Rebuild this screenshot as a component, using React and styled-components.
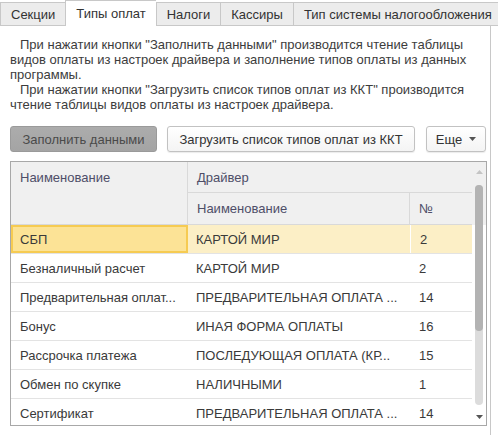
import React from "react";
import styled, { createGlobalStyle } from "styled-components";

const Global = createGlobalStyle`
  html, body { margin: 0; padding: 0; background: #fff; }
  body { font-family: "Liberation Sans", Arial, sans-serif; }
`;

const Root = styled.div`
  width: 498px;
  height: 435px;
  overflow: hidden;
  background: #fff;
  color: #333;
  font-size: 13px;
`;

const TabBar = styled.div`
  display: flex;
  align-items: flex-end;
  height: 26px;
  width: 491px;
`;

const Tab = styled.div`
  box-sizing: border-box;
  display: flex;
  align-items: center;
  padding: 0 10px;
  height: ${(p) => (p.$active ? "26px" : "24px")};
  background: ${(p) => (p.$active ? "#fff" : "#ececec")};
  border-top: 1px solid #c8c8c8;
  border-left: 1px solid #c8c8c8;
  border-bottom: ${(p) => (p.$active ? "none" : "1px solid #c8c8c8")};
  border-right: ${(p) => (p.$last ? "1px solid #c8c8c8" : "none")};
  color: #333;
  white-space: nowrap;
  line-height: 15px;
  padding-bottom: ${(p) => (p.$active ? "1px" : "0")};
`;

const Panel = styled.div`
  box-sizing: border-box;
  width: 491px;
  height: 409px;
  border-right: 1px solid #c8c8c8;
  padding: 11px 0 0 10px;
`;

const Info = styled.p`
  margin: 0;
  font-size: 13px;
  line-height: 15px;
  color: #3c3c3c;
  text-indent: 10px;
  white-space: nowrap;
`;

const Toolbar = styled.div`
  display: flex;
  align-items: center;
  gap: 10px;
  margin-top: 14px;
`;

const Button = styled.button`
  box-sizing: border-box;
  display: flex;
  align-items: center;
  justify-content: center;
  gap: 7px;
  width: ${(p) => p.$w}px;
  height: 26px;
  margin-left: ${(p) => p.$ml || 0}px;
  padding: 0;
  border-radius: 3px;
  font-family: "Liberation Sans", Arial, sans-serif;
  font-size: 13px;
  cursor: pointer;
  color: ${(p) => (p.$pressed ? "#4a4a4a" : "#333")};
  border: 1px solid ${(p) => (p.$pressed ? "#9a9a9a" : "#c2c2c2")};
  background: ${(p) =>
    p.$pressed
      ? "linear-gradient(#acacac, #a4a4a4)"
      : "linear-gradient(#ffffff, #f4f4f4)"};
  box-shadow: ${(p) => (p.$pressed ? "none" : "0 1px 1px rgba(0,0,0,0.08)")};
`;

const Table = styled.div`
  box-sizing: border-box;
  display: flex;
  width: 477px;
  height: 265px;
  margin-top: 9px;
  border: 1px solid #a8a8a8;
  overflow: hidden;
`;

const GridArea = styled.div`
  width: 461px;
  flex: none;
`;

const Header = styled.div`
  display: grid;
  grid-template-columns: 177px 222px 62px;
  grid-template-rows: 31px 32px;
  background: #f0f0f0;
`;

const HeadCell = styled.div`
  box-sizing: border-box;
  grid-column: ${(p) => p.$col || "auto"};
  grid-row: ${(p) => p.$row || "auto"};
  padding: ${(p) => (p.$top ? "8px 0 0 9px" : "0 0 0 9px")};
  display: flex;
  align-items: ${(p) => (p.$top ? "flex-start" : "center")};
  border-bottom: 1px solid #d9d9d9;
  border-right: ${(p) => (p.$sep ? "1px solid #d9d9d9" : "none")};
  color: #4e4e68;
  line-height: 15px;
  white-space: nowrap;
`;

const Row = styled.div`
  display: grid;
  grid-template-columns: 177px 222px 62px;
  height: 29px;
  box-sizing: border-box;
  border-bottom: 1px solid #e3e3e3;
  background: ${(p) => (p.$selected ? "#fcefc6" : "#fff")};
`;

const Cell = styled.div`
  box-sizing: border-box;
  display: flex;
  align-items: center;
  padding-left: ${(p) => (p.$narrow ? "8px" : "9px")};
  white-space: nowrap;
  overflow: hidden;
  color: #3a3a3a;
  line-height: 15px;
  border-left: ${(p) => (p.$divider ? "1px solid #ffffff" : "none")};
  background: ${(p) => (p.$current ? "#fce396" : "transparent")};
  box-shadow: ${(p) => (p.$current ? "inset 0 0 0 2px #f6cb52" : "none")};
`;

const ScrollCol = styled.div`
  width: 14px;
  flex: none;
  display: flex;
  flex-direction: column;
  align-items: center;
  background: linear-gradient(#f0f0f0 0, #f0f0f0 63px, #fff 63px);
  padding-top: 8px;
`;

const Arrow = styled.svg`
  display: block;
  flex: none;
`;

const Track = styled.div`
  width: 8px;
  height: 220px;
  margin-top: 11px;
  border-radius: 4px;
  background: #dcdcdc;
  flex: none;
`;

const Thumb = styled.div`
  width: 8px;
  height: 146px;
  border-radius: 4px;
  background: #b3b3b3;
`;

const tabs = ["Секции", "Типы оплат", "Налоги", "Кассиры", "Тип системы налогообложения"];

const rows = [
  ["СБП", "КАРТОЙ МИР", "2"],
  ["Безналичный расчет", "КАРТОЙ МИР", "2"],
  ["Предварительная оплат...", "ПРЕДВАРИТЕЛЬНАЯ ОПЛАТА ...", "14"],
  ["Бонус", "ИНАЯ ФОРМА ОПЛАТЫ", "16"],
  ["Рассрочка платежа", "ПОСЛЕДУЮЩАЯ ОПЛАТА (КР...", "15"],
  ["Обмен по скупке", "НАЛИЧНЫМИ", "1"],
  ["Сертификат", "ПРЕДВАРИТЕЛЬНАЯ ОПЛАТА ...", "14"],
];

export default function App() {
  return (
    <Root>
      <Global />
      <TabBar>
        {tabs.map((t, i) => (
          <Tab key={t} $active={i === 1} $last={i === tabs.length - 1}>
            {t}
          </Tab>
        ))}
      </TabBar>
      <Panel>
        <Info>
          При нажатии кнопки "Заполнить данными" производится чтение таблицы
          <br />
          видов оплаты из настроек драйвера и заполнение типов оплаты из данных
          <br />
          программы.
        </Info>
        <Info>
          При нажатии кнопки "Загрузить список типов оплат из ККТ" производится
          <br />
          чтение таблицы видов оплаты из настроек драйвера.
        </Info>
        <Toolbar>
          <Button $w={147} $pressed>
            Заполнить данными
          </Button>
          <Button $w={248}>Загрузить список типов оплат из ККТ</Button>
          <Button $w={60} $ml={1}>
            Еще
            <Arrow width="7" height="4" viewBox="0 0 7 4">
              <path d="M0 0 H7 L3.5 4 Z" fill="#555" />
            </Arrow>
          </Button>
        </Toolbar>
        <Table>
          <GridArea>
            <Header>
              <HeadCell $col="1" $row="1 / span 2" $top $sep>
                Наименование
              </HeadCell>
              <HeadCell $col="2 / span 2" $row="1">
                Драйвер
              </HeadCell>
              <HeadCell $col="2" $row="2" $sep>
                Наименование
              </HeadCell>
              <HeadCell $col="3" $row="2">
                №
              </HeadCell>
            </Header>
            {rows.map((r, i) => (
              <Row key={i} $selected={i === 0}>
                <Cell $current={i === 0}>{r[0]}</Cell>
                <Cell $narrow>{r[1]}</Cell>
                <Cell $divider={i === 0}>{r[2]}</Cell>
              </Row>
            ))}
          </GridArea>
          <ScrollCol>
            <Arrow width="7" height="4" viewBox="0 0 7 4">
              <path d="M0 4 H7 L3.5 0 Z" fill="#c4c4c4" />
            </Arrow>
            <Track>
              <Thumb />
            </Track>
            <Arrow width="7" height="4" viewBox="0 0 7 4" style={{ marginTop: 10 }}>
              <path d="M0 0 H7 L3.5 4 Z" fill="#555" />
            </Arrow>
          </ScrollCol>
        </Table>
      </Panel>
    </Root>
  );
}
